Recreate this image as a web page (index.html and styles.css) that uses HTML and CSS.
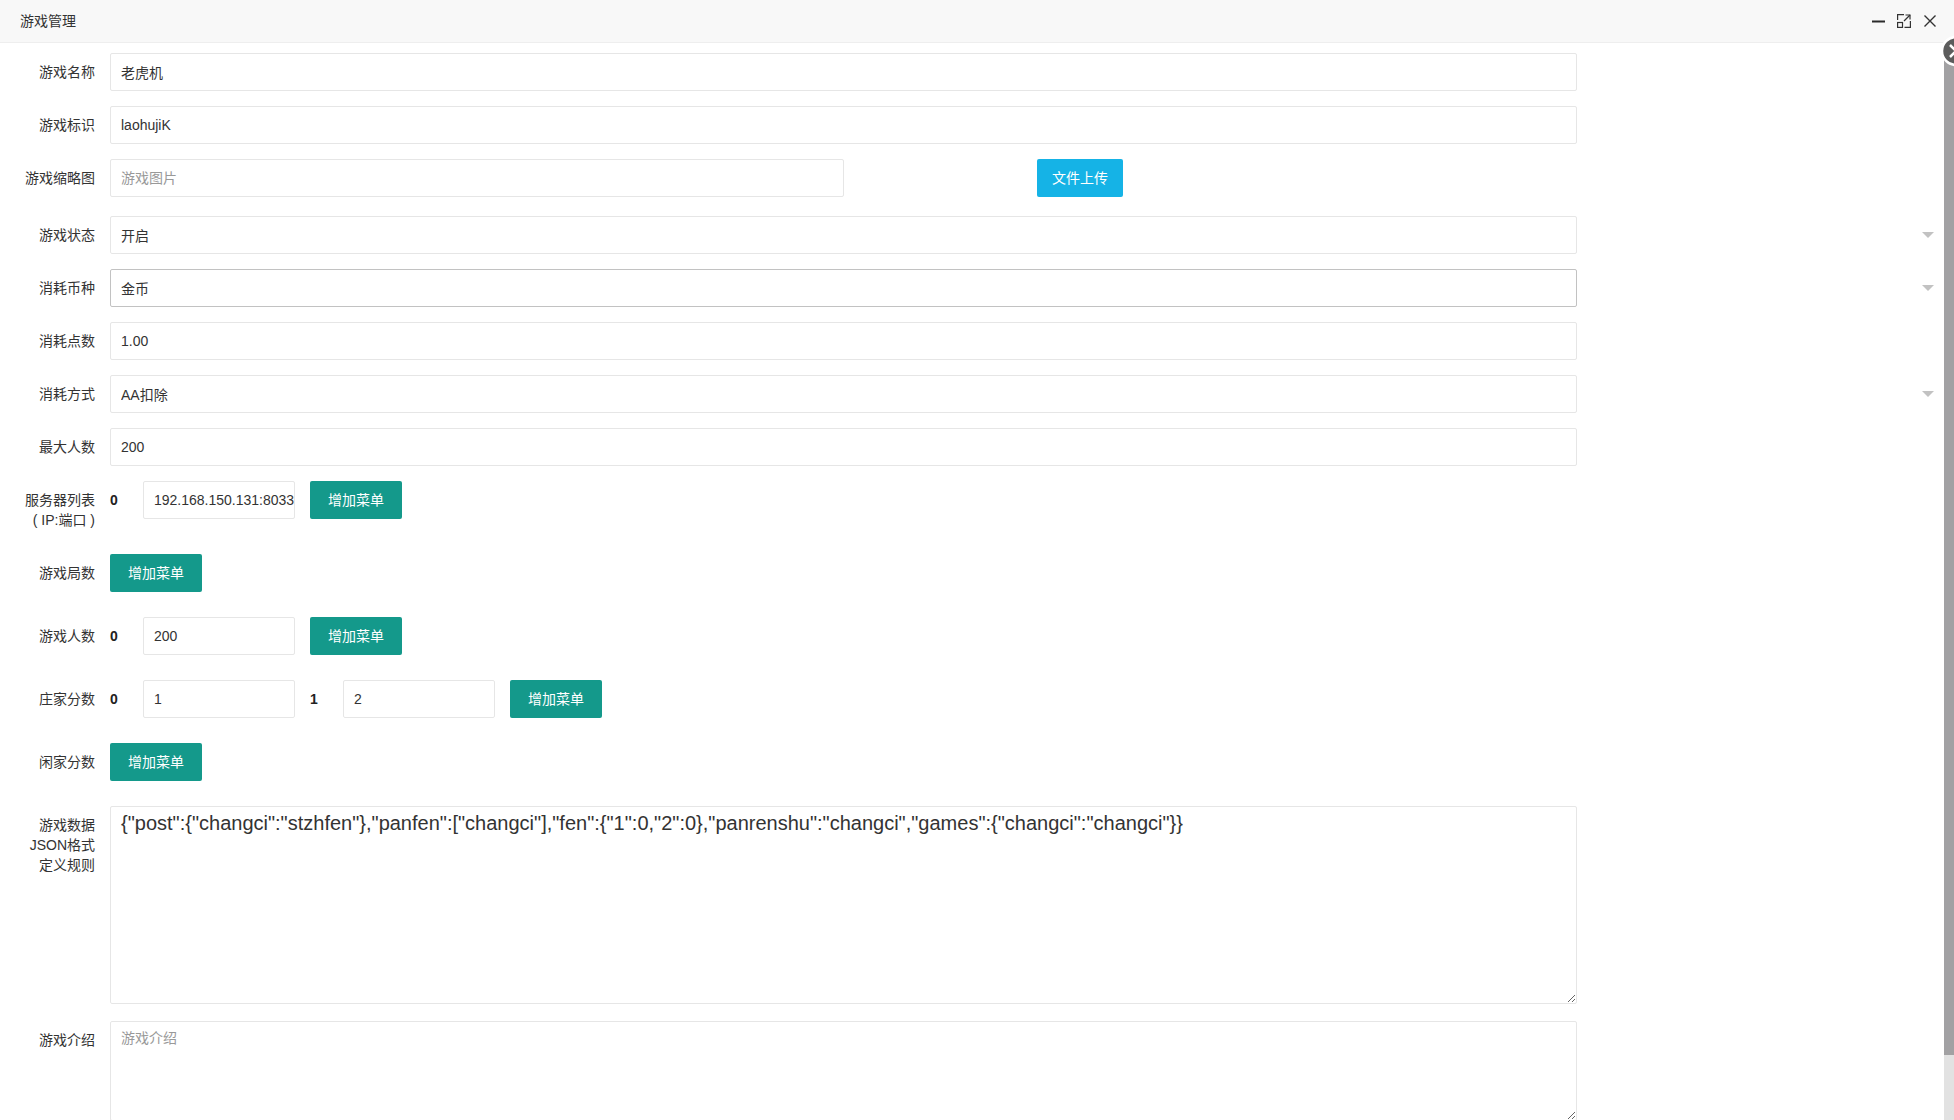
FILE: index.html
```html
<!DOCTYPE html>
<html lang="zh-CN">
<head>
    <meta charset="UTF-8">
    <title>游戏管理</title>
    <link rel="stylesheet" href="styles.css">
</head>
<body>
    <div class="layer">
        <div class="layer-title">
            游戏管理
            <span class="setwin">
                <svg class="win-icon" width="14" height="14" viewBox="0 0 14 14"><path d="M1 7.5 H14" stroke="#2b2b2b" stroke-width="2"/></svg>
                <svg class="win-icon" width="14" height="14" viewBox="0 0 14 14" fill="none" stroke="#333" stroke-width="1.2"><path d="M0.6 6 V0.6 H7"/><path d="M13.4 7 V13.4 H7.5"/><rect x="0.6" y="8.5" width="4.9" height="4.9"/><path d="M7 7 L13 1"/><path d="M8.5 1 H13 V5.5"/></svg>
                <svg class="win-icon" width="14" height="14" viewBox="0 0 14 14" fill="none" stroke="#333" stroke-width="1.4"><path d="M1.5 1.5 L12.5 12.5 M12.5 1.5 L1.5 12.5"/></svg>
            </span>
        </div>

        <div class="layer-content">
            <form class="game-form">
                <div class="form-item">
                    <label class="form-label">游戏名称</label>
                    <div class="input-block">
                        <input class="form-input" type="text" value="老虎机">
                    </div>
                </div>

                <div class="form-item">
                    <label class="form-label">游戏标识</label>
                    <div class="input-block">
                        <input class="form-input" type="text" value="laohujiK">
                    </div>
                </div>

                <div class="form-item thumb-item">
                    <label class="form-label">游戏缩略图</label>
                    <div class="input-block thumb-block">
                        <div class="thumb-col">
                            <input class="form-input" type="text" placeholder="游戏图片">
                        </div>
                        <div class="thumb-col upload-col">
                            <button type="button" class="btn btn-upload">文件上传</button>
                        </div>
                    </div>
                </div>

                <div class="form-item">
                    <label class="form-label">游戏状态</label>
                    <div class="input-block select-block">
                        <input class="form-input" type="text" value="开启" readonly>
                        <i class="edge"></i>
                    </div>
                </div>

                <div class="form-item">
                    <label class="form-label">消耗币种</label>
                    <div class="input-block select-block">
                        <input class="form-input is-hover" type="text" value="金币" readonly>
                        <i class="edge"></i>
                    </div>
                </div>

                <div class="form-item">
                    <label class="form-label">消耗点数</label>
                    <div class="input-block">
                        <input class="form-input" type="text" value="1.00">
                    </div>
                </div>

                <div class="form-item">
                    <label class="form-label">消耗方式</label>
                    <div class="input-block select-block">
                        <input class="form-input" type="text" value="AA扣除" readonly>
                        <i class="edge"></i>
                    </div>
                </div>

                <div class="form-item">
                    <label class="form-label">最大人数</label>
                    <div class="input-block">
                        <input class="form-input" type="text" value="200">
                    </div>
                </div>

                <div class="form-item">
                    <label class="form-label">服务器列表<br>( IP:端口 )</label>
                    <div class="input-block inline-block">
                        <span class="num">0</span>
                        <input class="form-input inline-input" type="text" value="192.168.150.131:8033">
                        <button type="button" class="btn">增加菜单</button>
                    </div>
                </div>

                <div class="form-item">
                    <label class="form-label">游戏局数</label>
                    <div class="input-block inline-block">
                        <button type="button" class="btn">增加菜单</button>
                    </div>
                </div>

                <div class="form-item">
                    <label class="form-label">游戏人数</label>
                    <div class="input-block inline-block">
                        <span class="num">0</span>
                        <input class="form-input inline-input" type="text" value="200">
                        <button type="button" class="btn">增加菜单</button>
                    </div>
                </div>

                <div class="form-item">
                    <label class="form-label">庄家分数</label>
                    <div class="input-block inline-block">
                        <span class="num">0</span>
                        <input class="form-input inline-input" type="text" value="1">
                        <span class="num">1</span>
                        <input class="form-input inline-input" type="text" value="2">
                        <button type="button" class="btn">增加菜单</button>
                    </div>
                </div>

                <div class="form-item">
                    <label class="form-label">闲家分数</label>
                    <div class="input-block inline-block">
                        <button type="button" class="btn">增加菜单</button>
                    </div>
                </div>

                <div class="form-item json-item">
                    <label class="form-label">游戏数据<br>JSON格式<br>定义规则</label>
                    <div class="input-block">
                        <textarea class="form-textarea json-textarea">{"post":{"changci":"stzhfen"},"panfen":["changci"],"fen":{"1":0,"2":0},"panrenshu":"changci","games":{"changci":"changci"}}</textarea>
                    </div>
                </div>

                <div class="form-item">
                    <label class="form-label">游戏介绍</label>
                    <div class="input-block">
                        <textarea class="form-textarea intro-textarea" placeholder="游戏介绍"></textarea>
                    </div>
                </div>
            </form>

            <div class="scrollbar">
                <div class="scroll-thumb"></div>
            </div>
        </div>

        <!-- round close button, mostly outside the window -->
        <span class="close2">
            <svg width="32" height="32" viewBox="0 0 32 32"><circle cx="16" cy="16" r="14" fill="#5c5c5c" stroke="#fff" stroke-width="2.5"/><path d="M10 22 L22 10 M10 10 L22 22" stroke="#fff" stroke-width="2.5"/></svg>
        </span>
    </div>
</body>
</html>
```

FILE: styles.css
```css
html,
body {
    margin: 0;
    padding: 0;
    height: 100%;
    overflow: hidden;
}

body {
    font-family: "Liberation Sans", Arial, "Noto Sans CJK SC", sans-serif;
    font-size: 14px;
    color: #333;
    background: #fff;
}

.layer {
    position: relative;
    height: 100%;
}

.layer-title {
    position: relative;
    height: 42px;
    line-height: 42px;
    padding: 0 80px 0 20px;
    background: #f8f8f8;
    border-bottom: 1px solid #eee;
    color: #333;
}

.setwin {
    position: absolute;
    right: 17px;
    top: 0;
    height: 42px;
    display: flex;
    align-items: center;
    gap: 12px;
}

.win-icon {
    display: block;
}

.layer-content {
    display: flex;
    height: 1077px;
}

.game-form {
    flex: 1;
    min-width: 0;
    padding-top: 10px;
    overflow: hidden;
}

.scrollbar {
    width: 10px;
    flex: none;
    background: #e2e2e2;
}

.scroll-thumb {
    height: 1012px;
    background: #a2a1a3;
}

.close2 {
    position: absolute;
    left: 1940px;
    top: 35px;
    line-height: 0;
}

/* form rows */
.form-item {
    display: flex;
    align-items: flex-start;
    margin-bottom: 15px;
}

.thumb-item {
    margin-bottom: 19px;
}

.json-item {
    margin-bottom: 17px;
}

.form-label {
    width: 80px;
    flex: none;
    padding: 9px 15px;
    line-height: 20px;
    text-align: right;
    color: #333;
}

.input-block {
    flex: 1;
    min-width: 0;
    position: relative;
}

.form-input {
    display: block;
    width: 80%;
    height: 38px;
    box-sizing: border-box;
    padding: 0 10px;
    border: 1px solid #e6e6e6;
    border-radius: 2px;
    background: #fff;
    color: #333;
    font-family: inherit;
    font-size: 14px;
    outline: none;
}

.form-input.is-hover {
    border-color: #c2c2c2;
}

.form-input::placeholder,
.form-textarea::placeholder {
    color: #999;
}

/* select look */
.select-block .edge {
    position: absolute;
    right: 10px;
    top: 50%;
    margin-top: -3px;
    width: 0;
    height: 0;
    border-width: 6px;
    border-style: solid dashed dashed;
    border-color: #c2c2c2 transparent transparent;
}

/* thumbnail + upload */
.thumb-block {
    display: flex;
}

.thumb-col {
    width: 50%;
    box-sizing: border-box;
}

.upload-col {
    padding-left: 10px;
}

/* inline rows */
.inline-block {
    display: flex;
    align-items: flex-start;
    padding-bottom: 10px;
}

.num {
    width: 33px;
    flex: none;
    line-height: 38px;
    font-weight: bold;
    color: #222;
}

.form-input.inline-input {
    width: 152px;
    flex: none;
    margin-right: 15px;
    padding-right: 0;
}

.btn {
    height: 38px;
    line-height: 38px;
    padding: 0 18px;
    border: none;
    border-radius: 2px;
    background: #14998b;
    color: #fff;
    font-family: inherit;
    font-size: 14px;
    white-space: nowrap;
    cursor: pointer;
}

.btn-upload {
    padding: 0 15px;
    background: #15b3e6;
}

/* textareas */
.form-textarea {
    display: block;
    width: 80%;
    box-sizing: border-box;
    padding: 6px 10px;
    border: 1px solid #e6e6e6;
    border-radius: 2px;
    line-height: 20px;
    color: #333;
    font-family: inherit;
    background: #fff;
    outline: none;
}

.json-textarea {
    height: 198px;
    font-size: 20px;
}

.intro-textarea {
    height: 100px;
    font-size: 14px;
}
```
